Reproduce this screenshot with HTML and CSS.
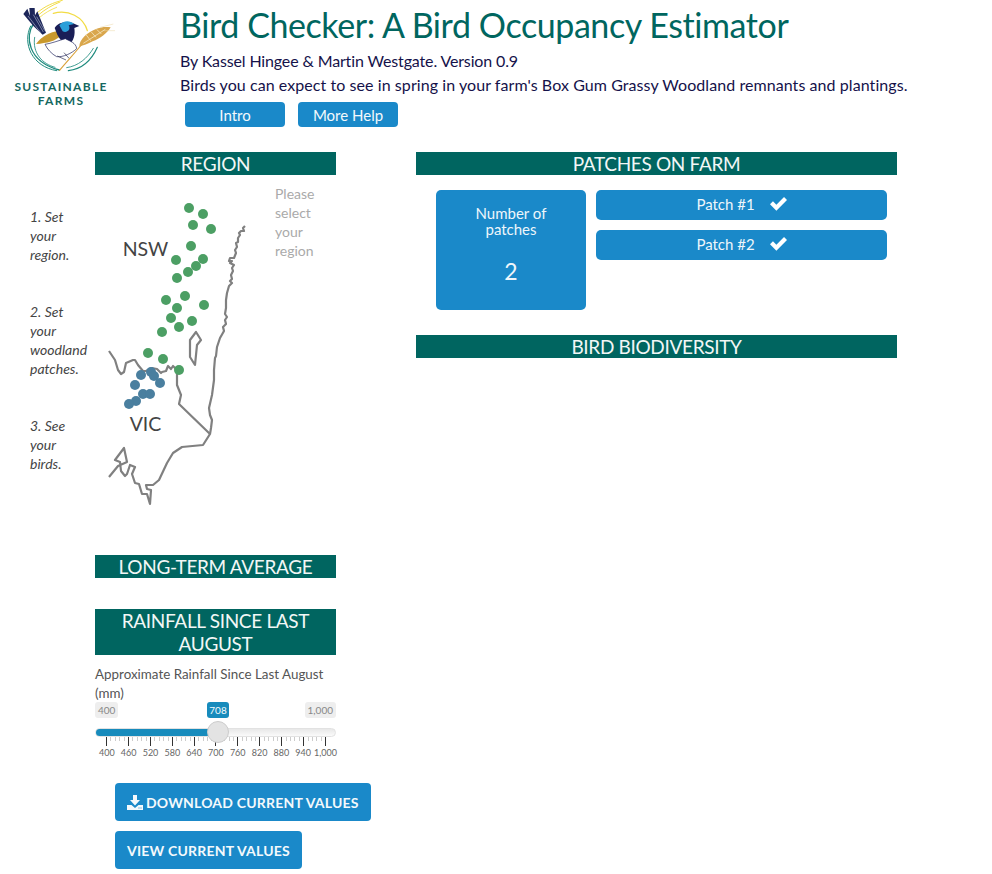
FILE: index.html
```
<!DOCTYPE html>
<html lang="en">
<head>
<meta charset="utf-8">
<title>Bird Checker</title>
<link rel="stylesheet" href="styles.css">
</head>
<body>
<header class="top">
  <div class="logo">
    <svg class="logo-art" viewBox="0 0 390 225" width="130" height="75" aria-hidden="true">
      <g fill="none" stroke="#f2dc45" stroke-linecap="round">
        <path d="M112 38 C135 18 160 8 187 1" stroke-width="3"/>
        <path d="M114 46 C135 28 155 16 180 6" stroke-width="3"/>
        <path d="M118 53 C135 38 150 30 170 22" stroke-width="2.500"/>
        <path d="M160 40 C205 28 250 50 262 92" stroke-width="4"/>
      </g>
      <g fill="none" stroke-linecap="round">
        <path d="M104 66 C72 110 84 185 178 210" stroke="#1d8a7d" stroke-width="4"/>
        <path d="M92 78 C66 130 96 200 170 212" stroke="#1d8a7d" stroke-width="3"/>
        <path d="M104 112 C96 160 128 192 165 202" stroke="#1d8a7d" stroke-width="2.500"/>
        <path d="M205 212 C245 208 275 180 292 142" stroke="#1d8a7d" stroke-width="3.500"/>
        <path d="M200 203 C235 198 262 175 280 145" stroke="#1d8a7d" stroke-width="2.500"/>
      </g>
      <path d="M70 42 L82 26 L90 48 L88 24 L104 24 L105 46 L112 34 L138 98 L128 104 L100 78 Z" fill="#1c2659"/>
      <path d="M84 48 L122 98 M100 44 L130 96 M110 50 L134 92" stroke="#d7dcec" stroke-width="1.500" fill="none"/>
      <path d="M108 132 C125 108 150 96 176 92 L180 108 C170 122 140 130 108 132 Z" fill="#c9992d"/>
      <path d="M164 84 C172 68 196 62 216 68 L238 78 L223 84 C226 104 222 122 205 138 C190 132 180 118 172 104 Z" fill="#1a1e57"/>
      <path d="M178 76 C190 62 208 60 222 72 L206 76 C214 90 200 100 188 94 C184 88 182 82 178 76 Z" fill="#2b9fd9"/>
      <path d="M135 133 C155 130 175 122 196 116 C210 124 228 128 230 146 C215 160 190 172 170 170 C155 162 142 148 135 133 Z" fill="#fff" stroke="#1a1e57" stroke-width="2"/>
      <path d="M172 168 L198 180 M192 158 L208 176" stroke="#2b2b4a" stroke-width="2" fill="none"/>
      <path d="M178 212 C195 190 220 165 246 132" stroke="#d9a33c" stroke-width="3.500" fill="none"/>
      <path d="M238 140 C238 118 262 96 290 86 C305 80 320 80 332 82 C322 100 300 116 278 124 C264 132 250 136 238 140 Z" fill="#d9a64c"/>
      <path d="M250 130 L316 88 M258 104 L272 122 M274 96 L288 112 M290 88 L304 102" stroke="#f4e4bc" stroke-width="2.500" fill="none"/>
      <path d="M300 82 L340 72 M310 92 L345 92" stroke="#ecd9a8" stroke-width="1.500" fill="none"/>
    </svg>
    <div class="logo-name">SUSTAINABLE</div>
    <div class="logo-sub">FARMS</div>
  </div>
  <div class="intro">
    <h1 class="title">Bird Checker: A Bird Occupancy Estimator</h1>
    <p class="byline byline-authors">By Kassel Hingee &amp; Martin Westgate. Version 0.9</p>
    <p class="byline byline-about">Birds you can expect to see in spring in your farm's Box Gum Grassy Woodland remnants and plantings.</p>
    <div class="top-buttons">
      <button class="small-btn">Intro</button>
      <button class="small-btn">More Help</button>
    </div>
  </div>
</header>

<main class="page">
  <aside class="steps">
    <p class="step step-one">1. Set<br>your<br>region.</p>
    <p class="step step-two">2. Set<br>your<br>woodland<br>patches.</p>
    <p class="step step-three">3. See<br>your<br>birds.</p>
  </aside>

  <section class="left">
    <h2 class="bar">Region</h2>
    <div class="region">
      <svg class="map" viewBox="95 175 180 380" width="180" height="380" role="img" aria-label="Map of regions">
        <g class="lines">
          <path d="M245 226 L243 228 L244 231 L241 231 L239 233 L240 235 L238 238 L238 242 L236 243 L237 247 L235 250 L236 253 L234 258 L230 258 L229 261 L232 261 L230 263 L234 265 L232 268 L233 271 L231 275 L232 279 L230 281 L232 283 L229 286 L227 293 L226 300 L226 308 L225 314 L227 317 L225 320 L226 324 L223 327 L224 331 L220 338 L217 347 L216 356 L215 358 L214 370 L214 380 L212 395 L209 408 L210 415 L212 420 L211 428 L210 434 L203 445 L182 447 L173 453 L167 463 L159 480 L153 485 L146 485 L147 489 L151 490 L150 504 L147 494 L142 494 L139 484 L135 483 L132 474 L135 467 L130 465 L127 474 L125 476 L121 471 L120 462 L115 460 L124 448 L127 462 L118 466 L109 477"/>
          <path d="M210 434 L179 404 L181 395 L177 385 L177 370 L173 366 L171 369 L168 366 L166 371 L162 372 L161 373 L157 369 L152 368 L146 371 L143 371 L138 365 L135 360 L133 360 L126 363 L124 372 L121 374 L118 370 L115 360 L109 351"/>
          <path d="M196 332 L201 340 L197 345 L196 355 L195 365 L190 357 L190 340 Z"/>
        </g>
        <g class="dots-nsw">
          <circle cx="189" cy="208" r="5"/><circle cx="203" cy="214" r="5"/><circle cx="193" cy="225" r="5"/><circle cx="211" cy="229" r="5"/><circle cx="191" cy="246" r="5"/><circle cx="176" cy="260" r="5"/><circle cx="203" cy="259" r="5"/><circle cx="196" cy="266" r="5"/><circle cx="188" cy="272" r="5"/><circle cx="177" cy="278" r="5"/><circle cx="166" cy="300" r="5"/><circle cx="185" cy="296" r="5"/><circle cx="204" cy="305" r="5"/><circle cx="177" cy="308" r="5"/><circle cx="171" cy="318" r="5"/><circle cx="192" cy="321" r="5"/><circle cx="179" cy="327" r="5"/><circle cx="162" cy="332" r="5"/><circle cx="148" cy="353" r="5"/><circle cx="163" cy="359" r="5"/><circle cx="179" cy="370" r="5"/>
        </g>
        <g class="dots-vic">
          <circle cx="141" cy="375" r="5"/><circle cx="151" cy="372" r="5"/><circle cx="154" cy="376" r="5"/><circle cx="160" cy="383" r="5"/><circle cx="135" cy="385" r="5"/><circle cx="143" cy="394" r="5"/><circle cx="150" cy="394" r="5"/><circle cx="136" cy="401" r="5"/><circle cx="129" cy="404" r="5"/>
        </g>
        <text class="map-label" x="145.500" y="256" text-anchor="middle">NSW</text>
        <text class="map-label" x="145.500" y="431" text-anchor="middle">VIC</text>
      </svg>
      <p class="hint">Please<br>select<br>your<br>region</p>
    </div>
    <h2 class="bar">Long-term average</h2>
    <h2 class="bar bar-rain">Rainfall since last August</h2>
    <label class="slider-label">Approximate Rainfall Since Last August (mm)</label>
    <div class="slider">
      <span class="end end-min">400</span>
      <span class="end end-max">1,000</span>
      <span class="value">708</span>
      <div class="track"><div class="fill"></div></div>
      <svg class="ticks" viewBox="0 0 241 12" width="241" height="12" aria-hidden="true">
        <path class="minor" d="M15.500 0V4M20.500 0V4M24.500 0V4M29.500 0V4M37.500 0V4M42.500 0V4M46.500 0V4M51.500 0V4M59.500 0V4M64.500 0V4M68.500 0V4M73.500 0V4M81.500 0V4M86.500 0V4M90.500 0V4M95.500 0V4M103.500 0V4M108.500 0V4M112.500 0V4M116.500 0V4M125.500 0V4M129.500 0V4M134.500 0V4M138.500 0V4M147.500 0V4M151.500 0V4M156.500 0V4M160.500 0V4M169.500 0V4M173.500 0V4M178.500 0V4M182.500 0V4M191.500 0V4M195.500 0V4M199.500 0V4M204.500 0V4M213.500 0V4M217.500 0V4M221.500 0V4M226.500 0V4"/>
        <path class="major" d="M11.500 0V9M33.500 0V9M55.500 0V9M77.500 0V9M99.500 0V9M120.500 0V9M142.500 0V9M164.500 0V9M186.500 0V9M208.500 0V9M230.500 0V9"/>
      </svg>
      <div class="handle"></div>
      <div class="tick-labels">
        <span>400</span><span>460</span><span>520</span><span>580</span><span>640</span><span>700</span><span>760</span><span>820</span><span>880</span><span>940</span><span>1,000</span>
      </div>
    </div>
    <div class="actions">
      <button class="action-btn">
        <svg class="dl-icon" viewBox="0 0 16 16" width="16" height="16" aria-hidden="true"><path d="M6 1H10V6H13L8 11.500L3 6H6ZM0 11H4.500L8 14L11.500 11H16V16H0ZM11.500 13.500V14.500H12.500V13.500ZM13.500 13.500V14.500H14.500V13.500Z" fill-rule="evenodd"/></svg>
        Download current values</button>
      <button class="action-btn">View current values</button>
    </div>
  </section>

  <section class="right">
    <h2 class="bar">Patches on farm</h2>
    <div class="patches">
      <div class="count">
        <div class="count-label">Number of patches</div>
        <div class="count-value">2</div>
      </div>
      <div class="patch-list">
        <button class="patch">Patch #1 <svg class="check" viewBox="0 0 16 13" width="17" height="14" aria-hidden="true"><path d="M0 6.800L2.800 4L6 7.200L13.200 0L16 2.800L6 12.800Z"/></svg></button>
        <button class="patch">Patch #2 <svg class="check" viewBox="0 0 16 13" width="17" height="14" aria-hidden="true"><path d="M0 6.800L2.800 4L6 7.200L13.200 0L16 2.800L6 12.800Z"/></svg></button>
      </div>
    </div>
    <h2 class="bar">Bird biodiversity</h2>
  </section>
</main>
</body>
</html>
```
FILE: styles.css
```
* { box-sizing: border-box; }

body {
  margin: 0;
  font-family: "Lato", "Noto Sans", sans-serif;
  font-size: 14px;
  color: #444;
  background: #fff;
}

p, h1, h2 { margin: 0; font-weight: 400; }

button { font-family: inherit; border: 0; cursor: pointer; }

.top {
  display: flex;
  height: 152px;
}

.logo {
  width: 180px;
  padding-left: 14px;
  color: #15685f;
}

.logo-art { display: block; margin-left: -14px; }

.logo-name {
  width: 94px;
  margin-top: 5px;
  font-size: 12px;
  font-weight: 700;
  line-height: 14px;
  letter-spacing: 1.300px;
  text-align: center;
  white-space: nowrap;
}

.logo-sub {
  width: 94px;
  font-size: 12px;
  font-weight: 700;
  line-height: 13px;
  letter-spacing: 1.300px;
  text-align: center;
}

.title {
  margin-top: 5px;
  font-size: 34px;
  line-height: 40px;
  letter-spacing: -0.420px;
  color: #00665f;
  white-space: nowrap;
}

.byline {
  font-size: 16px;
  line-height: 24px;
  color: #15124a;
  white-space: nowrap;
}

.byline-authors {
  margin-top: 4px;
  letter-spacing: -0.140px;
}

.byline-about { letter-spacing: 0.070px; }

.top-buttons {
  display: flex;
  gap: 13px;
  margin: 5px 0 0 5px;
}

.small-btn {
  width: 100px;
  height: 25px;
  border-radius: 4px;
  background: #1a89c9;
  color: #f4f9fc;
  font-size: 15px;
}

.page {
  display: grid;
  grid-template-columns: 65px 241px 481px;
  column-gap: 0;
  padding-left: 30px;
}

.steps { padding-top: 55px; }

.step {
  font-size: 14px;
  line-height: 19px;
  font-style: italic;
}

.step-two { margin-top: 38px; }
.step-three { margin-top: 38px; }

.left { width: 241px; }

.right {
  width: 481px;
  margin-left: 80px;
}

.bar {
  min-height: 23px;
  background: #006560;
  color: #f2f7f6;
  font-size: 19px;
  line-height: 23px;
  letter-spacing: -0.330px;
  text-align: center;
  text-transform: uppercase;
}

.region {
  display: flex;
  height: 380px;
}

.map { display: block; flex: none; }

.lines path {
  fill: none;
  stroke: #808080;
  stroke-width: 2.200;
  stroke-linejoin: round;
}

.dots-nsw circle { fill: #4c9f64; }
.dots-vic circle { fill: #4a7f9f; }

.map-label {
  font-size: 19.500px;
  fill: #444;
}

.hint {
  padding-top: 9px;
  font-size: 14px;
  line-height: 19px;
  color: #aaa;
}

.bar-rain { margin-top: 31px; }

.slider-label {
  display: block;
  margin-top: 10px;
  line-height: 19px;
  font-size: 13.400px;
  color: #555;
}

.slider {
  position: relative;
  height: 63px;
  margin-top: -1px;
}

.end, .value {
  position: absolute;
  top: 0;
  height: 16px;
  padding: 0 3px;
  border-radius: 3px;
  font-size: 10px;
  line-height: 16px;
}

.end { background: #eee; color: #888; }
.end-min { left: 0; }
.end-max { right: 0; }

.value {
  left: 112px;
  background: #178bbc;
  color: #f4fbfd;
  width: 22px;
  text-align: center;
  padding: 0;
}

.track {
  position: absolute;
  top: 26px;
  left: 0;
  width: 241px;
  height: 9px;
  border-radius: 5px;
  background: linear-gradient(#e8e8e8, #fafafa);
  border: 1px solid #e2e2e2;
  overflow: hidden;
}

.fill {
  width: 123px;
  height: 9px;
  margin: -1px 0 0 -1px;
  background: #178bbc;
}

.handle {
  position: absolute;
  top: 19px;
  left: 112px;
  width: 22px;
  height: 22px;
  border-radius: 50%;
  background: #e3e3e3;
  border: 1px solid #ccc;
}

.ticks {
  position: absolute;
  top: 35px;
  left: 0;
  display: block;
}

.major { stroke: #333; stroke-width: 1; fill: none; }
.minor { stroke: #ccc; stroke-width: 1; fill: none; }

.tick-labels {
  position: absolute;
  top: 45px;
  left: 1px;
  width: 241px;
  display: grid;
  grid-template-columns: repeat(11, 1fr);
  font-size: 9px;
  line-height: 12px;
  color: #666;
  text-align: center;
}

.tick-labels span { justify-self: center; white-space: nowrap; }

.actions {
  display: flex;
  flex-direction: column;
  align-items: flex-start;
  gap: 10px;
  margin: 18px 0 0 20px;
}

.action-btn {
  display: flex;
  align-items: center;
  gap: 3px;
  height: 38px;
  padding: 0 12px;
  border-radius: 4px;
  background: #1a89c9;
  color: #f4f9fc;
  font-size: 14px;
  font-weight: 700;
  letter-spacing: 0.200px;
  text-transform: uppercase;
  white-space: nowrap;
}

.dl-icon { fill: #f4f9fc; flex: none; }

.patches {
  display: flex;
  height: 160px;
  padding: 15px 10px 0 20px;
  gap: 10px;
}

.count {
  width: 150px;
  height: 120px;
  border-radius: 5px;
  background: #1a89c9;
  color: #eef6fb;
  text-align: center;
  padding: 15px 20px 0;
  font-size: 15px;
  line-height: 16px;
}

.count-value {
  margin-top: 19px;
  font-size: 23px;
  line-height: 30px;
}

.patch-list {
  flex: 1;
  display: flex;
  flex-direction: column;
  gap: 10px;
}

.patch {
  display: flex;
  align-items: center;
  justify-content: center;
  gap: 15px;
  height: 30px;
  padding-bottom: 4px;
  border-radius: 5px;
  background: #1a89c9;
  color: #eef6fb;
  font-size: 15px;
}

.check { fill: #fff; flex: none; }
```
